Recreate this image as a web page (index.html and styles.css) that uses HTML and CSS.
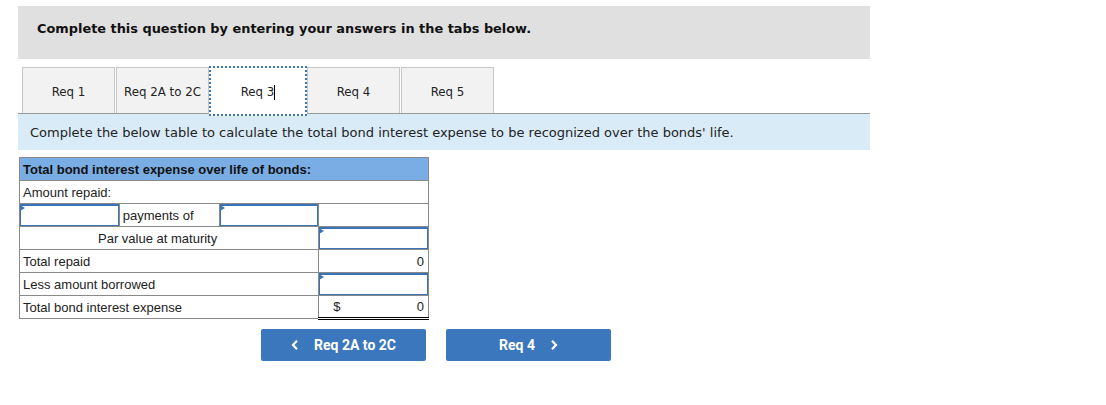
FILE: index.html
```html
<!DOCTYPE html>
<html>
<head>
<meta charset="utf-8">
<link rel="stylesheet" href="styles.css">
</head>
<body>
<div class="page">
  <div class="banner">Complete this question by entering your answers in the tabs below.</div>
  <div class="tabs">
    <div class="tab">Req 1</div>
    <div class="tab">Req 2A to 2C</div>
    <div class="tab active">Req 3<span class="caret"></span></div>
    <div class="tab">Req 4</div>
    <div class="tab">Req 5</div>
  </div>
  <div class="instr">Complete the below table to calculate the total bond interest expense to be recognized over the bonds' life.</div>
  <table class="grid">
    <colgroup><col class="c1"><col class="c2"><col class="c3"><col class="c4"></colgroup>
    <tr><th colspan="4" class="head">Total bond interest expense over life of bonds:</th></tr>
    <tr><td colspan="4">Amount repaid:</td></tr>
    <tr>
      <td class="inp"><div class="field"></div></td>
      <td>payments of</td>
      <td class="inp"><div class="field"></div></td>
      <td></td>
    </tr>
    <tr><td colspan="3" class="par">Par value at maturity</td><td class="inp"><div class="field"></div></td></tr>
    <tr><td colspan="3">Total repaid</td><td class="num">0</td></tr>
    <tr><td colspan="3">Less amount borrowed</td><td class="inp"><div class="field"></div></td></tr>
    <tr><td colspan="3">Total bond interest expense</td><td class="num total"><span class="dollar">$</span><span>0</span></td></tr>
  </table>
  <div class="nav">
    <button class="btn"><svg class="chev" width="8" height="12" viewBox="0 0 8 12"><path d="M6 1.8 L2 6 L6 10.2" fill="none" stroke="#fff" stroke-width="2.2"/></svg><span>Req 2A to 2C</span></button>
    <button class="btn next"><span>Req 4</span><svg class="chev" width="8" height="12" viewBox="0 0 8 12"><path d="M2 1.8 L6 6 L2 10.2" fill="none" stroke="#fff" stroke-width="2.2"/></svg></button>
  </div>
</div>
</body>
</html>
```
FILE: styles.css
```css
html, body { margin: 0; padding: 0; background: #fff; }
.page { padding: 6px 0 0 18px; width: 852px; }
.banner {
  height: 53px; background: #e0e0e0;
  font-family: "DejaVu Sans", Verdana, sans-serif; font-weight: bold; font-size: 12.9px;
  color: #111; padding-left: 19px; line-height: 45px; box-sizing: border-box;
}
.tabs {
  display: flex; margin-top: 8px; padding-left: 4px; gap: 1px;
  border-bottom: 1px solid #999; height: 47px; box-sizing: border-box;
}
.tab {
  width: 93px; height: 46px; box-sizing: border-box; padding-top: 2px;
  border: 1px solid #c6c6c6; border-bottom: none; background: #f2f2f2;
  font-family: "DejaVu Sans", Verdana, sans-serif; font-size: 11.8px; color: #222;
  display: flex; align-items: center; justify-content: center;
}
.tab.active {
  background: #fff; border: 2px dotted #3b73b9; height: 50px; width: 98px;
  margin: -1px -1px 0 -1px; position: relative; z-index: 1; padding-top: 2px;
}
.caret { display: inline-block; width: 1px; height: 15px; background: #000; }
.instr {
  height: 36px; background: #daebf8; padding: 2px 0 0 12px; line-height: 34px; box-sizing: border-box;
  font-family: "DejaVu Sans", Verdana, sans-serif; font-size: 13px; color: #222;
}
.grid {
  margin-top: 7px; margin-left: 1px; border-collapse: collapse; width: 410px;
  font-family: "Liberation Sans", Arial, sans-serif; font-size: 13px; color: #222;
}
.c1, .c2, .c3 { width: 100px; }
.c4 { width: 110px; }
.grid th, .grid td {
  border: 1px solid #8a8a8a; height: 22px; padding: 1px 3px 0; text-align: left;
  box-sizing: border-box; line-height: 16px;
}
.grid tr { height: 23px; }
.grid th.head { background: #7aade4; font-weight: bold; color: #111; }
.grid td.par { padding-left: 78px; }
.grid td.num { text-align: right; padding-right: 4px; }
.grid td.total { border-bottom: 3px double #000; }
.dollar { float: left; padding-left: 11px; }
.grid td.inp { padding: 0; }
.field {
  height: 22px; border: 1px solid #3a73b8; border-top-width: 2px; box-sizing: border-box;
  position: relative; background: #fff;
}
.field::before {
  content: ""; position: absolute; left: -1px; top: -1px;
  border-left: 5px solid #3a73b8; border-top: 3px solid transparent; border-bottom: 3px solid transparent;
}
.nav { display: flex; gap: 20px; margin-top: 9px; margin-left: 243px; }
.btn {
  width: 165px; height: 32px; background: #3b77bc; border: none; border-radius: 2px;
  color: #fff; font-family: Roboto, "Liberation Sans", sans-serif; font-weight: bold; font-size: 14px;
  display: flex; align-items: center; justify-content: center; gap: 15px; padding: 0;
}
.btn .chev { display: block; }
```
